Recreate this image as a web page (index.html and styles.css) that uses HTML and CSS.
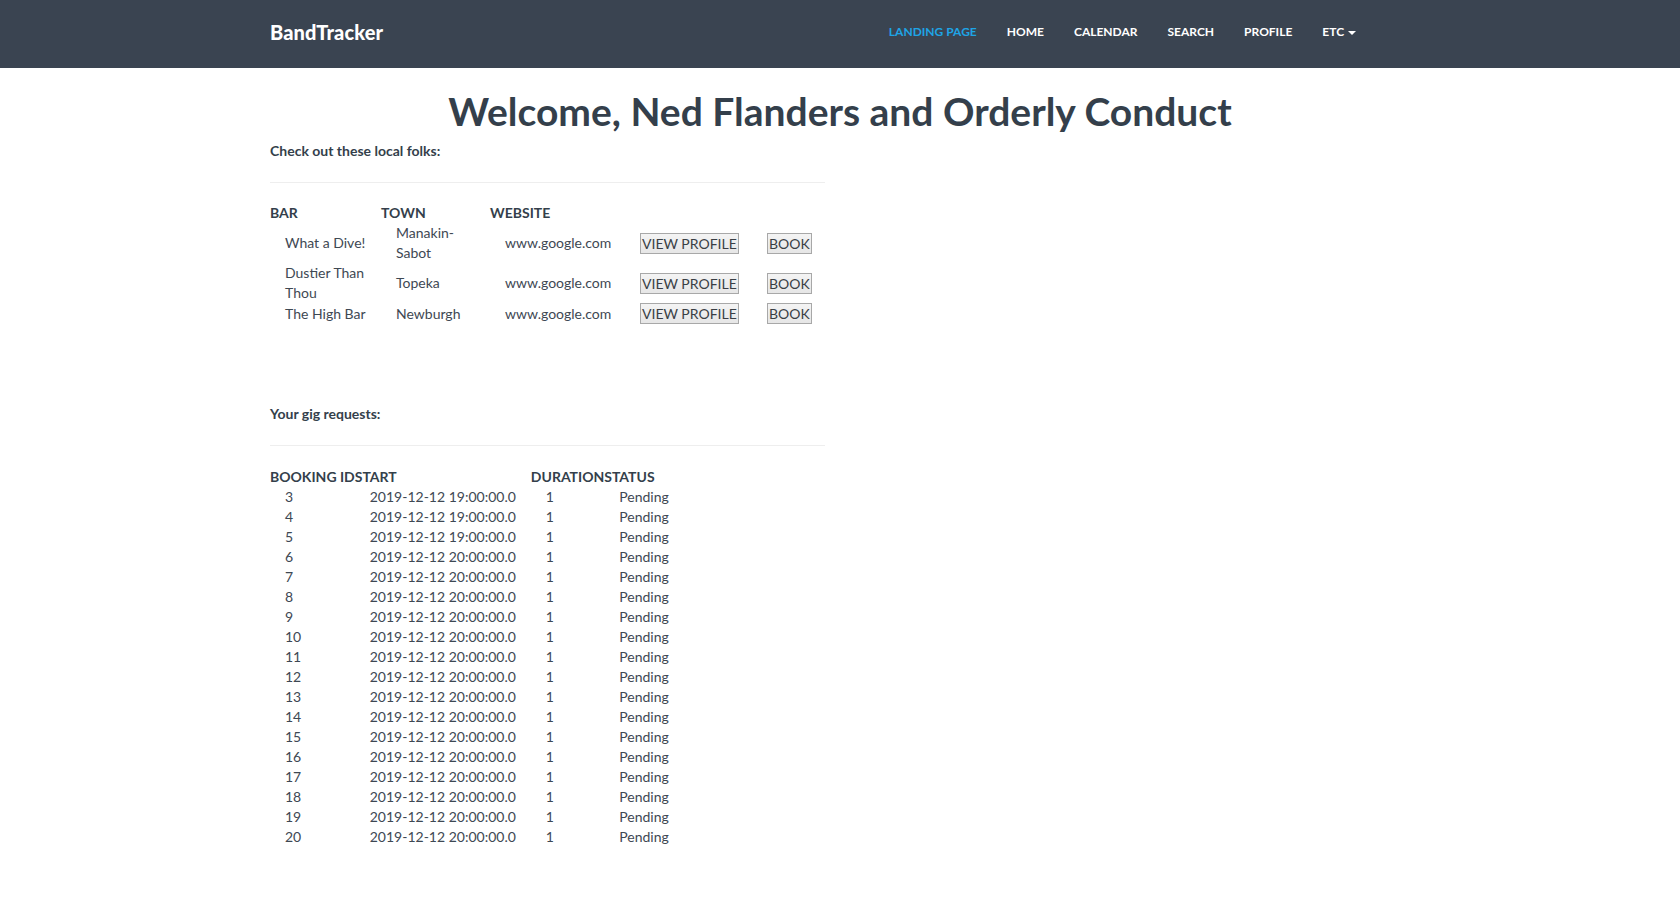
FILE: index.html
```html
<!DOCTYPE html>
<html lang="en">
<head>
<meta charset="utf-8">
<title>BandTracker</title>
<link rel="stylesheet" href="styles.css">
</head>
<body>
<nav class="navbar">
  <div class="nav-inner">
    <a class="brand" href="#">BandTracker</a>
    <ul class="nav-links">
      <li><a class="active" href="#">Landing Page</a></li>
      <li><a href="#">Home</a></li>
      <li><a href="#">Calendar</a></li>
      <li><a href="#">Search</a></li>
      <li><a href="#">Profile</a></li>
      <li><a href="#">Etc <span class="caret"></span></a></li>
    </ul>
  </div>
</nav>
<main class="container">
  <h1 class="title">Welcome, Ned Flanders and Orderly Conduct</h1>
  <section class="half">
    <h4 class="sub">Check out these local folks:</h4>
    <hr class="rule">
    <table class="tbl bars">
      <thead>
        <tr><th class="c1">Bar</th><th class="c2">Town</th><th class="c3">Website</th><th class="c4"></th><th class="c5"></th></tr>
      </thead>
      <tbody>
        <tr><td>What a Dive!</td><td>Manakin-Sabot</td><td>www.google.com</td><td><button class="btn">VIEW PROFILE</button></td><td><button class="btn">BOOK</button></td></tr>
        <tr><td>Dustier Than Thou</td><td>Topeka</td><td>www.google.com</td><td><button class="btn">VIEW PROFILE</button></td><td><button class="btn">BOOK</button></td></tr>
        <tr><td>The High Bar</td><td>Newburgh</td><td>www.google.com</td><td><button class="btn">VIEW PROFILE</button></td><td><button class="btn">BOOK</button></td></tr>
      </tbody>
    </table>
  </section>
  <section class="half gigs">
    <h4 class="sub">Your gig requests:</h4>
    <hr class="rule">
    <table class="tbl gig">
      <thead>
        <tr><th>Booking ID</th><th>Start</th><th>Duration</th><th>Status</th></tr>
      </thead>
      <tbody>
        <tr><td>3</td><td>2019-12-12 19:00:00.0</td><td>1</td><td>Pending</td></tr>
        <tr><td>4</td><td>2019-12-12 19:00:00.0</td><td>1</td><td>Pending</td></tr>
        <tr><td>5</td><td>2019-12-12 19:00:00.0</td><td>1</td><td>Pending</td></tr>
        <tr><td>6</td><td>2019-12-12 20:00:00.0</td><td>1</td><td>Pending</td></tr>
        <tr><td>7</td><td>2019-12-12 20:00:00.0</td><td>1</td><td>Pending</td></tr>
        <tr><td>8</td><td>2019-12-12 20:00:00.0</td><td>1</td><td>Pending</td></tr>
        <tr><td>9</td><td>2019-12-12 20:00:00.0</td><td>1</td><td>Pending</td></tr>
        <tr><td>10</td><td>2019-12-12 20:00:00.0</td><td>1</td><td>Pending</td></tr>
        <tr><td>11</td><td>2019-12-12 20:00:00.0</td><td>1</td><td>Pending</td></tr>
        <tr><td>12</td><td>2019-12-12 20:00:00.0</td><td>1</td><td>Pending</td></tr>
        <tr><td>13</td><td>2019-12-12 20:00:00.0</td><td>1</td><td>Pending</td></tr>
        <tr><td>14</td><td>2019-12-12 20:00:00.0</td><td>1</td><td>Pending</td></tr>
        <tr><td>15</td><td>2019-12-12 20:00:00.0</td><td>1</td><td>Pending</td></tr>
        <tr><td>16</td><td>2019-12-12 20:00:00.0</td><td>1</td><td>Pending</td></tr>
        <tr><td>17</td><td>2019-12-12 20:00:00.0</td><td>1</td><td>Pending</td></tr>
        <tr><td>18</td><td>2019-12-12 20:00:00.0</td><td>1</td><td>Pending</td></tr>
        <tr><td>19</td><td>2019-12-12 20:00:00.0</td><td>1</td><td>Pending</td></tr>
        <tr><td>20</td><td>2019-12-12 20:00:00.0</td><td>1</td><td>Pending</td></tr>
      </tbody>
    </table>
  </section>
</main>
</body>
</html>
```
FILE: styles.css
```css
* { box-sizing: border-box; }
html, body { margin: 0; padding: 0; }
body {
  font-family: Lato, "Open Sans", "Liberation Sans", sans-serif;
  font-size: 14px;
  line-height: 20px;
  color: #3e4853;
  background: #fff;
}
.navbar {
  background: #3a4451;
  height: 68px;
}
.nav-inner {
  width: 1140px;
  margin: 0 auto;
  height: 68px;
  display: flex;
  align-items: center;
  justify-content: space-between;
}
.brand {
  color: #fff;
  text-decoration: none;
  font-weight: 900;
  font-size: 20px;
  letter-spacing: 0.1px;
  margin-top: -4px;
}
.nav-links {
  list-style: none;
  margin: -4px 39px 0 0;
  padding: 0;
  display: flex;
}
.nav-links a {
  display: block;
  padding: 0 15px;
  color: #fff;
  text-decoration: none;
  text-transform: uppercase;
  font-weight: 700;
  font-size: 12px;
  line-height: 20px;
}
.nav-links a.active { color: #1ea4e6; }
.caret {
  display: inline-block;
  width: 0;
  height: 0;
  margin-left: 1px;
  vertical-align: middle;
  border-top: 4px solid #fff;
  border-left: 4px solid transparent;
  border-right: 4px solid transparent;
}
.container {
  width: 1140px;
  margin: 0 auto;
}
.title {
  margin: 22px 0 9px;
  text-align: center;
  font-size: 39px;
  line-height: 42px;
  font-weight: 700;
  color: #343f4b;
}
.half { width: 555px; }
.gigs { margin-top: 80px; }
.sub {
  margin: 0;
  font-size: 14px;
  line-height: 20px;
  font-weight: 700;
  color: #343f4b;
}
.rule {
  margin: 21px 0 20px;
  border: 0;
  border-top: 1px solid #eeeeee;
  height: 0;
}
.tbl {
  border-collapse: collapse;
  border-spacing: 0;
}
.tbl th {
  padding: 0;
  text-align: left;
  text-transform: uppercase;
  font-size: 14px;
  line-height: 20px;
  font-weight: 700;
  color: #343f4b;
  white-space: nowrap;
  vertical-align: middle;
}
.tbl td {
  padding: 0 15px;
  vertical-align: middle;
}
.bars {
  width: 555px;
  table-layout: fixed;
}
.bars .c1 { width: 111px; }
.bars .c2 { width: 109px; }
.bars .c3 { width: 135px; }
.bars .c4 { width: 127px; }
.bars .c5 { width: 73px; }
.btn {
  font-family: Lato, "Liberation Sans", sans-serif;
  font-size: 14px;
  line-height: 17px;
  padding: 1px 1px;
  color: #3a3f45;
  background: linear-gradient(#f4f4f4, #e6e6e6);
  border: 1px solid #a8a8a8;
  border-radius: 0;
  display: block;
  white-space: nowrap;
}
.gig th { line-height: 21px; }
.gig td { white-space: nowrap; }
```
